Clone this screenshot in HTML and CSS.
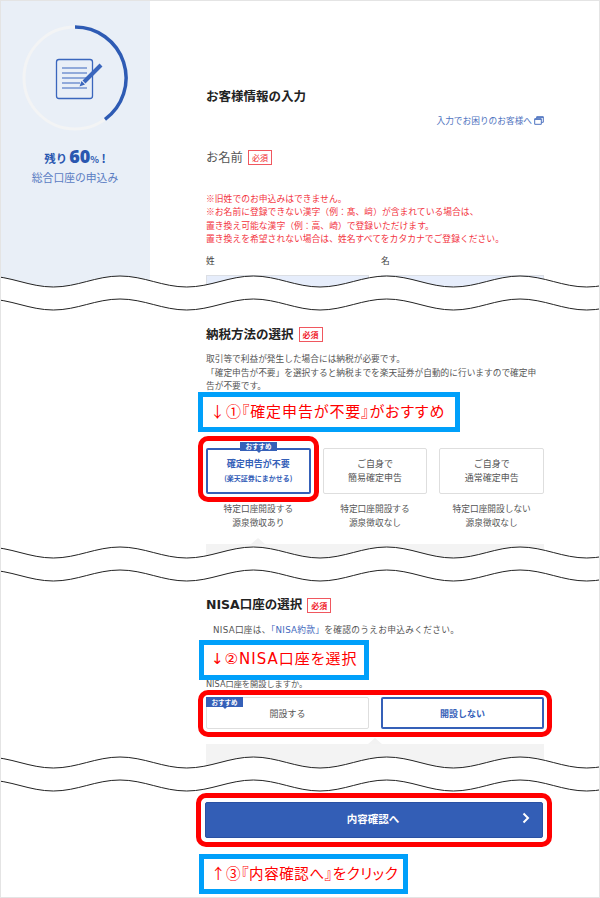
FILE: index.html
```html
<!DOCTYPE html>
<html lang="ja">
<head>
<meta charset="utf-8">
<title>お客様情報の入力</title>
<link rel="stylesheet" href="styles.css">
</head>
<body>
<div class="page">
  <section class="sec sec-1">
    <aside class="side">
      <svg class="ring" viewBox="0 0 110 110" width="110" height="110">
        <circle class="ring-track" cx="55" cy="55" r="51"/>
        <path class="ring-bar" d="M55 4A51 51 0 0 1 85 96.300"/>
        <rect class="doc" x="36.500" y="36.500" width="36" height="39" rx="2.500"/>
        <path class="doc-lines" d="M42 45H67M42 50H67M42 55H67M42 60H60M42 65H67"/>
        <path class="pen" d="M81 42L64 59"/>
        <path class="pen-tip" d="M61.500 58L65 61.500L59.500 63.500Z"/>
      </svg>
      <p class="remain">残り<b class="remain-num">60</b><span class="remain-pct">%</span> !</p>
      <p class="side-sub">総合口座の申込み</p>
    </aside>
    <div class="main">
      <h2 class="title">お客様情報の入力</h2>
      <p class="help">入力でお困りのお客様へ<svg class="ext" viewBox="0 0 10 9" width="10" height="9"><path d="M.7 2.700H7.300V8.300H.7ZM2.700 2.700V.7H9.300V6.300H7.300M.7 3.400H7.300M2.700 1.400H9.300"/></svg></p>
      <div class="name-row"><span class="name-label">お名前</span><span class="req req-thin">必須</span></div>
      <p class="notice">※旧姓でのお申込みはできません。<br>※お名前に登録できない漢字（例：髙、﨑）が含まれている場合は、<br>置き換え可能な漢字（例：高、崎）で登録いただけます。<br>置き換えを希望されない場合は、姓名すべてをカタカナでご登録ください。</p>
      <div class="fields">
        <div><div class="field-label">姓</div><div class="input"></div></div>
        <div><div class="field-label">名</div><div class="input"></div></div>
      </div>
    </div>
  </section>

  <section class="sec sec-2">
    <div class="head-row"><h2 class="title">納税方法の選択</h2><span class="req">必須</span></div>
    <p class="para para-tax">取引等で利益が発生した場合には納税が必要です。<br>「確定申告が不要」を選択すると納税までを楽天証券が自動的に行いますので確定申告が不要です。</p>
    <div class="choices">
      <div class="choice">
        <div class="opt opt-on opt-tall"><span class="tag tag-center">おすすめ</span><span>確定申告が不要</span><span class="opt-small">(楽天証券にまかせる)</span></div>
        <p class="caption">特定口座開設する<br>源泉徴収あり</p>
      </div>
      <div class="choice">
        <div class="opt opt-tall"><span>ご自身で</span><span>簡易確定申告</span></div>
        <p class="caption">特定口座開設する<br>源泉徴収なし</p>
      </div>
      <div class="choice">
        <div class="opt opt-tall"><span>ご自身で</span><span>通常確定申告</span></div>
        <p class="caption">特定口座開設しない<br>源泉徴収なし</p>
      </div>
    </div>
    <div class="panel panel-tax"></div>
    <div class="note note-1">↓①『確定申告が不要』がおすすめ</div>
    <div class="rim rim-1"></div>
  </section>

  <section class="sec sec-3">
    <div class="head-row"><h2 class="title title-latin">NISA口座の選択</h2><span class="req">必須</span></div>
    <p class="para para-nisa">NISA口座は、<span class="link">「NISA約款」</span>を確認のうえお申込みください。</p>
    <p class="para para-ask">NISA口座を開設しますか。</p>
    <div class="pair">
      <div class="opt opt-wide"><span class="tag tag-left">おすすめ</span><span>開設する</span></div>
      <div class="opt opt-on opt-wide"><span>開設しない</span></div>
    </div>
    <div class="panel panel-nisa"></div>
    <div class="note note-2">↓②NISA口座を選択</div>
    <div class="rim rim-2"></div>
  </section>

  <section class="sec sec-4">
    <div class="submit"><span class="submit-text">内容確認へ</span><svg class="chev" viewBox="0 0 8 12" width="8" height="12"><path d="M1.500 1.500L6 6L1.500 10.500"/></svg></div>
    <div class="note note-3">↑③『内容確認へ』をクリック</div>
    <div class="rim rim-3"></div>
  </section>

  <svg class="defs" width="0" height="0" aria-hidden="true">
    <symbol id="tear" viewBox="0 0 600 36">
      <path class="tear-fill" d="M-13.33 1c24 0 42.670 11 66.670 11c24 0 42.670 -11 66.670 -11c24 0 42.670 11 66.670 11c24 0 42.670 -11 66.670 -11c24 0 42.670 11 66.670 11c24 0 42.670 -11 66.670 -11c24 0 42.670 11 66.670 11c24 0 42.670 -11 66.670 -11c24 0 42.670 11 66.670 11c24 0 42.670 -11 66.670 -11V24c-24 0 -42.670 11 -66.670 11c-24 0 -42.670 -11 -66.670 -11c-24 0 -42.670 11 -66.670 11c-24 0 -42.670 -11 -66.670 -11c-24 0 -42.670 11 -66.670 11c-24 0 -42.670 -11 -66.670 -11c-24 0 -42.670 11 -66.670 11c-24 0 -42.670 -11 -66.670 -11c-24 0 -42.670 11 -66.670 11c-24 0 -42.670 -11 -66.670 -11Z"/>
      <path class="tear-line" d="M-13.33 1c24 0 42.670 11 66.670 11c24 0 42.670 -11 66.670 -11c24 0 42.670 11 66.670 11c24 0 42.670 -11 66.670 -11c24 0 42.670 11 66.670 11c24 0 42.670 -11 66.670 -11c24 0 42.670 11 66.670 11c24 0 42.670 -11 66.670 -11c24 0 42.670 11 66.670 11c24 0 42.670 -11 66.670 -11M-13.33 24c24 0 42.670 11 66.670 11c24 0 42.670 -11 66.670 -11c24 0 42.670 11 66.670 11c24 0 42.670 -11 66.670 -11c24 0 42.670 11 66.670 11c24 0 42.670 -11 66.670 -11c24 0 42.670 11 66.670 11c24 0 42.670 -11 66.670 -11c24 0 42.670 11 66.670 11c24 0 42.670 -11 66.670 -11"/>
    </symbol>
  </svg>
  <svg class="tear tear-1" width="600" height="36"><use href="#tear"/></svg>
  <svg class="tear tear-2" width="600" height="36"><use href="#tear"/></svg>
  <svg class="tear tear-3" width="600" height="36"><use href="#tear"/></svg>
</div>
</body>
</html>
```

FILE: styles.css
```css
* { box-sizing: border-box; }
html, body { margin: 0; padding: 0; background: #fff; }
body { font-family: "Noto Sans CJK JP", "Noto Sans", sans-serif; color: #444; }
p, h2 { margin: 0; font-weight: normal; }

.page { position: relative; width: 600px; height: 898px; overflow: hidden; background: #fff; }
.page::after { content: ""; position: absolute; inset: 0; border: 1px solid #e4e4e4; pointer-events: none; }

.sec { position: relative; overflow: hidden; background: #fff; }
.sec-1 { display: flex; height: 298px; }
.sec-2 { height: 272px; padding: 28px 56px 0 206px; }
.sec-3 { height: 209px; padding: 27px 56px 0 206px; }
.sec-4 { height: 119px; padding: 23px 57px 0 205px; }

/* sidebar */
.side { width: 150px; background: #e9eff7; padding-top: 23px; text-align: center; flex: none; }
.ring { display: block; margin: 0 auto; }
.ring-track { fill: none; stroke: #f3f4f5; stroke-width: 3; }
.ring-bar { fill: none; stroke: #2e5bb4; stroke-width: 3.500; }
.doc { fill: none; stroke: #3a66bd; stroke-width: 1.300; }
.doc-lines { fill: none; stroke: #3a66bd; stroke-width: 1.100; }
.pen { fill: none; stroke: #3a66bd; stroke-width: 4; }
.pen-tip { fill: #3a66bd; }
.remain { margin-top: 12px; height: 22px; line-height: 22px; font-size: 11.500px; font-weight: 700; color: #2a57b0; }
.remain-num { font-family: "Open Sans", sans-serif; font-size: 18px; margin-left: 2px; }
.remain-pct { font-size: 9px; }
.side-sub { margin-top: 3px; line-height: 14px; font-size: 10.800px; color: #5a7cc2; }

/* main column */
.main { flex: 1; padding: 88px 56px 0; }
.title { font-size: 12.500px; line-height: 16px; font-weight: 700; color: #222; white-space: nowrap; }
.title-latin { font-family: "DejaVu Sans", "Noto Sans CJK JP", sans-serif; }
.help { margin-top: 10px; display: flex; justify-content: flex-end; align-items: center; gap: 2px; height: 13px; font-size: 8.700px; color: #4f74c0; white-space: nowrap; }
.ext { flex: none; }
.ext path { fill: none; stroke: #4f74c0; stroke-width: 1; }
.name-row { margin-top: 22px; display: flex; align-items: center; gap: 5px; height: 16px; }
.name-label { font-size: 12.300px; color: #555; }
.req { display: inline-block; width: 24px; height: 15px; line-height: 13px; border: 1px solid #f0575f; color: #f01c2c; font-size: 8px; font-weight: 700; text-align: center; background: #fff; }
.req-thin { font-weight: 400; }
.notice { margin-top: 27px; font-size: 8.800px; line-height: 13.400px; color: #f3353f; white-space: nowrap; }
.fields { margin-top: 8px; display: grid; grid-template-columns: 163px 163px; column-gap: 12px; }
.field-label { font-size: 8.700px; line-height: 14px; color: #444; }
.input { margin-top: 7px; height: 30px; background: #e6edfb; border: 1px solid #dcdfe4; }

/* sections */
.head-row { display: flex; align-items: center; gap: 5px; height: 16px; }
.para { font-size: 8.700px; line-height: 13.500px; color: #555; }
.para-tax { margin-top: 10px; }
.para-nisa { margin-top: 11px; padding-left: 7px; white-space: nowrap; letter-spacing: .3px; font-family: "DejaVu Sans", "Noto Sans CJK JP", sans-serif; }
.para-ask { margin-top: 40px; white-space: nowrap; font-size: 8.200px; font-family: "DejaVu Sans", "Noto Sans CJK JP", sans-serif; }
.link { color: #3f69bd; }

.choices { margin-top: 55px; display: grid; grid-template-columns: repeat(3, 1fr); column-gap: 12px; }
.pair { margin-top: 6px; display: grid; grid-template-columns: 163px 163px; column-gap: 12px; }
.opt { position: relative; display: flex; flex-direction: column; align-items: center; justify-content: center; border: 1px solid #dedede; border-radius: 2px; background: #fff; font-size: 9px; color: #555; white-space: nowrap; }
.opt-tall { height: 46px; gap: 4px; line-height: 10px; }
.opt-wide { height: 32px; }
.opt-on { border: 2px solid #3560b8; color: #3560b8; font-weight: 700; }
.opt-small { font-size: 7px; }
.caption { margin-top: 8px; font-size: 8.700px; line-height: 14px; text-align: center; color: #555; white-space: nowrap; }

.tag { position: absolute; height: 9px; line-height: 9px; width: 37px; background: #3560b8; color: #fff; font-size: 6.500px; font-weight: 700; text-align: center; }
.tag::after { content: ""; position: absolute; left: 50%; top: 100%; margin-left: -2px; border: 2px solid transparent; border-top-color: #3560b8; }
.tag-center { top: -8px; left: 32px; }
.tag-left { top: -1px; left: -1px; height: 10px; line-height: 10px; }

.panel { position: relative; height: 60px; background-color: #f3f3f3; background-image: radial-gradient(#ebebeb 35%, transparent 40%); background-size: 2px 2px; }
.panel-tax { margin-top: 14px; }
.panel-nisa { margin-top: 15px; }
.panel::before { content: ""; position: absolute; top: -6px; border-left: 7px solid transparent; border-right: 7px solid transparent; border-bottom: 6px solid #f2f2f2; }
.panel-tax::before { left: 45px; }
.panel-nisa::before { left: 162px; }

.submit { position: relative; display: flex; align-items: center; justify-content: center; width: 338px; height: 36px; background: #335eb6; border: 1px solid #2a51a3; border-radius: 2px; color: #fff; font-size: 10.500px; font-weight: 700; }
.submit-text { margin-bottom: 3px; margin-right: 2px; }
.chev { position: absolute; right: 12px; top: 9px; }
.chev path { fill: none; stroke: #fff; stroke-width: 2; }

/* annotations */
.note { position: absolute; height: 40px; line-height: 28px; border: 5px solid #00a0fa; background: #fff; color: #f00; font-size: 15px; padding-left: 7px; white-space: nowrap; font-feature-settings: "palt"; letter-spacing: .9px; }
.note-1 { left: 198px; top: 94px; width: 262px; }
.note-2 { left: 199px; top: 70px; width: 170px; font-family: "DejaVu Sans", "Noto Sans CJK JP", sans-serif; letter-spacing: 1px; }
.note-3 { left: 199px; top: 75px; width: 209px; font-size: 14.500px; letter-spacing: .6px; }
.rim { position: absolute; border: 5px solid #f00; border-radius: 10px; }
.rim-1 { left: 198px; top: 138px; width: 121px; height: 66px; }
.rim-2 { left: 198px; top: 120px; width: 354px; height: 47px; }
.rim-3 { left: 196px; top: 14px; width: 356px; height: 54px; }

/* torn edges */
.defs { position: absolute; }
.tear { position: absolute; left: 0; display: block; }
.tear-1 { top: 275px; }
.tear-2 { top: 546px; }
.tear-3 { top: 756px; }
.tear-fill { fill: #fff; }
.tear-line { fill: none; stroke: #222; stroke-width: 1; }
```
